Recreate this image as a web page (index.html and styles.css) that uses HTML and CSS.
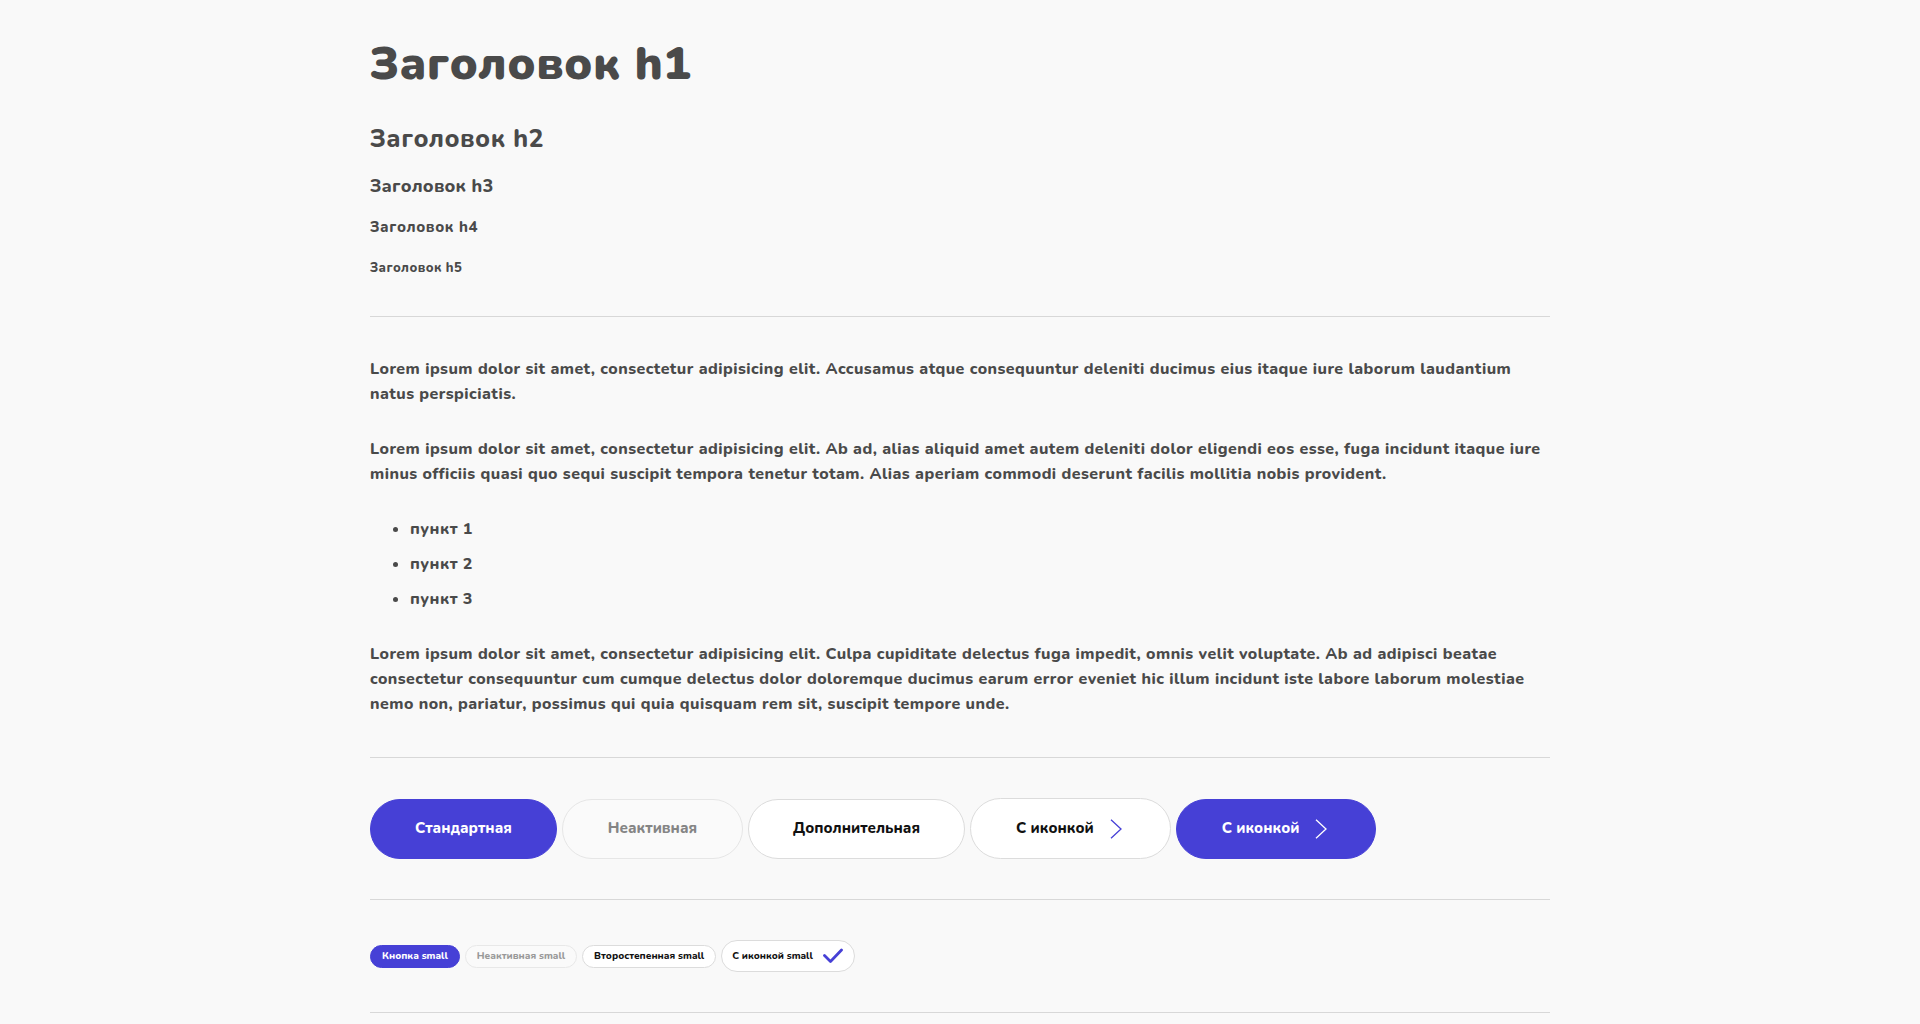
FILE: index.html
```html
<!DOCTYPE html>
<html lang="ru">
<head>
<meta charset="utf-8">
<title>Типографика</title>
<link rel="stylesheet" href="styles.css">
</head>
<body>
<main class="page">
  <h1 class="h1">Заголовок h1</h1>
  <h2 class="h2">Заголовок h2</h2>
  <h3 class="h3">Заголовок h3</h3>
  <h4 class="h4">Заголовок h4</h4>
  <h5 class="h5">Заголовок h5</h5>
  <hr class="divider">
  <p class="text">Lorem ipsum dolor sit amet, consectetur adipisicing elit. Accusamus atque consequuntur deleniti ducimus eius itaque iure laborum laudantium natus perspiciatis.</p>
  <p class="text">Lorem ipsum dolor sit amet, consectetur adipisicing elit. Ab ad, alias aliquid amet autem deleniti dolor eligendi eos esse, fuga incidunt itaque iure minus officiis quasi quo sequi suscipit tempora tenetur totam. Alias aperiam commodi deserunt facilis mollitia nobis provident.</p>
  <ul class="list">
    <li>пункт 1</li>
    <li>пункт 2</li>
    <li>пункт 3</li>
  </ul>
  <p class="text">Lorem ipsum dolor sit amet, consectetur adipisicing elit. Culpa cupiditate delectus fuga impedit, omnis velit voluptate. Ab ad adipisci beatae consectetur consequuntur cum cumque delectus dolor doloremque ducimus earum error eveniet hic illum incidunt iste labore laborum molestiae nemo non, pariatur, possimus qui quia quisquam rem sit, suscipit tempore unde.</p>
  <hr class="divider">
  <div class="btn-row">
    <button class="btn btn-primary">Стандартная</button>
    <button class="btn btn-disabled">Неактивная</button>
    <button class="btn btn-secondary">Дополнительная</button>
    <button class="btn btn-secondary btn-icon">С иконкой
      <svg class="chev" width="12" height="20" viewBox="0 0 12 20"><path d="M1 0.8 L11 10 L1 19.2" fill="none" stroke="currentColor" stroke-width="1.3"/></svg>
    </button>
    <button class="btn btn-primary btn-icon">С иконкой
      <svg class="chev" width="12" height="20" viewBox="0 0 12 20"><path d="M1 0.8 L11 10 L1 19.2" fill="none" stroke="currentColor" stroke-width="1.3"/></svg>
    </button>
  </div>
  <hr class="divider">
  <div class="btn-row">
    <button class="sbtn sbtn-primary">Кнопка small</button>
    <button class="sbtn sbtn-disabled">Неактивная small</button>
    <button class="sbtn sbtn-secondary">Второстепенная small</button>
    <button class="sbtn sbtn-secondary sbtn-icon">С иконкой small
      <svg class="check" width="20" height="16" viewBox="0 0 20 16"><path d="M1.5 7.5 L7.5 13.5 L18.5 2" fill="none" stroke="currentColor" stroke-width="2.8" stroke-linecap="round" stroke-linejoin="round"/></svg>
    </button>
  </div>
  <hr class="divider">
</main>
</body>
</html>
```

FILE: styles.css
```css
html, body {
  margin: 0;
  padding: 0;
}
body {
  background: #f9f9f9;
  color: #4a4a4a;
  font-family: "Nunito", "Open Sans", "Noto Sans", sans-serif;
  font-weight: 800;
}
.page {
  width: 1180px;
  margin: 0 auto;
  padding: 36px 0 60px;
}
.h1, .h2, .h3, .h4, .h5 {
  margin: 0;
  font-weight: 900;
  color: #4a4a4a;
}
.h1 { font-size: 46px; line-height: 56px; margin-bottom: 32px; letter-spacing: 0.5px; }
.h2 { font-size: 25px; line-height: 30px; margin-bottom: 21px; font-weight: 800; letter-spacing: 0.5px; }
.h3 { font-size: 18px; line-height: 22px; margin-bottom: 20px; font-weight: 800; letter-spacing: 0.2px; }
.h4 { font-size: 15px; line-height: 20px; margin-bottom: 23px; font-weight: 800; letter-spacing: 0.6px; }
.h5 { font-size: 13px; line-height: 16px; font-weight: 800; letter-spacing: 0.4px; }
.divider {
  border: 0;
  border-top: 1px solid #d8d8d8;
  height: 0;
  margin: 40px 0;
}
.text {
  font-size: 16px;
  line-height: 25px;
  margin: 30px 0;
  letter-spacing: 0.45px;
}
.list {
  margin: 30px 0;
  padding-left: 40px;
  font-size: 16px;
  line-height: 25px;
  letter-spacing: 0.45px;
}
.list li + li {
  margin-top: 10px;
}
.btn-row {
  display: flex;
  align-items: center;
  gap: 5px;
}
.btn {
  box-sizing: border-box;
  height: 60px;
  font-family: inherit;
  font-size: 15px;
  font-weight: 800;
  line-height: 17px;
  padding: 0 44px;
  border-radius: 31px;
  border: 1px solid transparent;
  cursor: pointer;
  display: inline-flex;
  align-items: center;
}
.btn-primary {
  background: #4640d6;
  border-color: #4640d6;
  color: #fff;
}
.btn-disabled {
  background: #fafafa;
  border-color: #e6e6e6;
  color: #858585;
  padding-left: 45px;
  padding-right: 45px;
}
.btn-secondary {
  background: #fff;
  border-color: #dcdcdc;
  color: #111;
}
.btn-icon {
  gap: 16px;
  padding-left: 45px;
  padding-right: 48px;
}
.btn-icon.btn-secondary {
  height: 61px;
}
.btn-icon.btn-secondary .chev {
  color: #4640d6;
}
.chev {
  display: block;
}
.sbtn {
  box-sizing: border-box;
  height: 23px;
  font-family: inherit;
  font-size: 10px;
  font-weight: 800;
  line-height: 12px;
  padding: 0 11px;
  border-radius: 12px;
  border: 1px solid transparent;
  display: inline-flex;
  align-items: center;
  cursor: pointer;
}
.sbtn-primary {
  background: #4640d6;
  border-color: #4640d6;
  color: #fff;
}
.sbtn-disabled {
  background: #fafafa;
  border-color: #e8e8e8;
  color: #999;
}
.sbtn-secondary {
  background: #fff;
  border-color: #dcdcdc;
  color: #111;
}
.sbtn-icon {
  height: 32px;
  gap: 10px;
  padding: 0 11px 0 10px;
  border-radius: 16px;
}
.sbtn-icon .check {
  color: #4640d6;
  display: block;
}
```
